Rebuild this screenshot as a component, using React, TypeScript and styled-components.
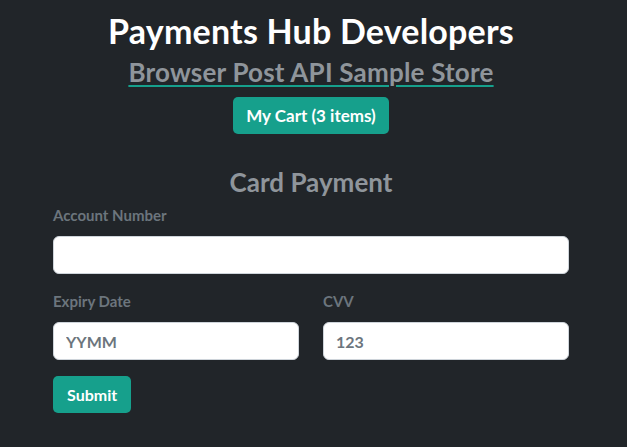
import React from 'react';
import styled, { createGlobalStyle } from 'styled-components';

const GlobalStyle = createGlobalStyle`
  html, body {
    margin: 0;
    padding: 0;
    background: #212529;
    font-family: Lato, "Noto Sans", sans-serif;
  }
`

const Page = styled.div`
  width: 516px;
  margin-left: 53px;
  padding-top: 10px;
  display: flex;
  flex-direction: column;
`

const Header = styled.header`
  display: flex;
  flex-direction: column;
  align-items: center;
`

const Title = styled.h1`
  margin: 0;
  color: #ffffff;
  font-size: 34px;
  font-weight: 700;
  line-height: 42px;
  letter-spacing: 0.2px;
`

const StoreLink = styled.a`
  color: #8f959b;
  font-size: 26px;
  font-weight: 700;
  line-height: 40px;
  letter-spacing: 0.2px;
  text-decoration: underline;
  text-decoration-color: #16a08c;
  text-decoration-thickness: 2px;
  text-underline-offset: 3px;
`

const Button = styled.button`
  box-sizing: border-box;
  background: #16a08c;
  color: #ffffff;
  border: none;
  border-radius: 5px;
  font-family: inherit;
  font-size: 17px;
  font-weight: 700;
  height: 37px;
  padding: 0 13px;
  cursor: pointer;
`

const CartButton = styled(Button)`
  margin-top: 5px;
`

const FormTitle = styled.h2`
  margin: 33px 0 0;
  text-align: center;
  color: #8f959b;
  font-size: 26px;
  font-weight: 700;
  line-height: 30px;
`

const Form = styled.form`
  display: flex;
  flex-direction: column;
`

const Row = styled.div`
  display: grid;
  grid-template-columns: 1fr 1fr;
  column-gap: 24px;
`

const Field = styled.div<{ $top: number }>`
  display: flex;
  flex-direction: column;
  margin-top: ${props => props.$top}px;
`

const Label = styled.label`
  color: #6c757d;
  font-size: 15px;
  font-weight: 700;
  line-height: 20px;
  margin-bottom: 11px;
`

const Input = styled.input`
  box-sizing: border-box;
  height: 38px;
  border: 1px solid #ced4da;
  border-radius: 6px;
  background: #ffffff;
  padding: 0 12px;
  font-family: inherit;
  font-size: 16px;
  font-weight: 700;
  color: #6c757d;
  &::placeholder {
    color: #6c757d;
  }
`

const SubmitButton = styled(Button)`
  align-self: flex-start;
  margin-top: 16px;
  padding: 0 14px;
  font-size: 16px;
`

export default function App() {
  return (
    <>
      <GlobalStyle />
      <Page>
        <Header>
          <Title>Payments Hub Developers</Title>
          <StoreLink href="#">Browser Post API Sample Store</StoreLink>
          <CartButton type="button">My Cart (3 items)</CartButton>
        </Header>
        <FormTitle>Card Payment</FormTitle>
        <Form onSubmit={e => e.preventDefault()}>
          <Field $top={8}>
            <Label>Account Number</Label>
            <Input type="text" />
          </Field>
          <Row>
            <Field $top={17}>
              <Label>Expiry Date</Label>
              <Input type="text" placeholder="YYMM" />
            </Field>
            <Field $top={17}>
              <Label>CVV</Label>
              <Input type="text" placeholder="123" />
            </Field>
          </Row>
          <SubmitButton type="submit">Submit</SubmitButton>
        </Form>
      </Page>
    </>
  )
}
